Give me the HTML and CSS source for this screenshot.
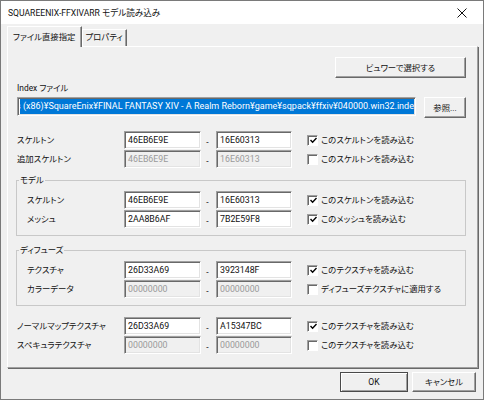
FILE: index.html
```html
<!DOCTYPE html>
<html lang="ja">
<head>
<meta charset="utf-8">
<title>SQUAREENIX-FFXIVARR モデル読み込み</title>
<link rel="stylesheet" href="styles.css">
</head>
<body>
<div class="window">
  <div class="titlebar">
    <span class="title">SQUAREENIX-FFXIVARR モデル読み込み</span>
    <span class="close"><svg width="10" height="10" viewBox="0 0 10 10"><path d="M0.5 0.5 L9.5 9.5 M9.5 0.5 L0.5 9.5" stroke="#111" stroke-width="1" fill="none"/></svg></span>
  </div>
  <div class="client">
    <div class="tabs">
      <div class="tab active">ファイル直接指定</div>
      <div class="tab">プロパティ</div>
    </div>
    <div class="panel">
      <div class="top-row"><div class="btn viewer">ビュワーで選択する</div></div>
      <div class="caption">Index ファイル</div>
      <div class="path-row">
        <div class="edit path"><span class="selection">s (x86)¥SquareEnix¥FINAL FANTASY XIV - A Realm Reborn¥game¥sqpack¥ffxiv¥040000.win32.index</span></div>
        <div class="btn browse">参照...</div>
      </div>

      <div class="rows first">
        <div class="row">
          <span class="lbl">スケルトン</span>
          <div class="edit">46EB6E9E</div>
          <span class="dash">-</span>
          <div class="edit">16E60313</div>
          <div class="check"><span class="box"><svg width="7" height="7" viewBox="0 0 7 7"><path d="M0.5 3 L2.6 5.3 L6.5 1" stroke="#000" stroke-width="1.4" fill="none"/></svg></span><span>このスケルトンを読み込む</span></div>
        </div>
        <div class="row">
          <span class="lbl">追加スケルトン</span>
          <div class="edit disabled">46EB6E9E</div>
          <span class="dash">-</span>
          <div class="edit disabled">16E60313</div>
          <div class="check"><span class="box"></span><span>このスケルトンを読み込む</span></div>
        </div>
      </div>

      <fieldset class="group">
        <legend>モデル</legend>
        <div class="row">
          <span class="lbl">スケルトン</span>
          <div class="edit">46EB6E9E</div>
          <span class="dash">-</span>
          <div class="edit">16E60313</div>
          <div class="check"><span class="box"><svg width="7" height="7" viewBox="0 0 7 7"><path d="M0.5 3 L2.6 5.3 L6.5 1" stroke="#000" stroke-width="1.4" fill="none"/></svg></span><span>このスケルトンを読み込む</span></div>
        </div>
        <div class="row">
          <span class="lbl">メッシュ</span>
          <div class="edit">2AA8B6AF</div>
          <span class="dash">-</span>
          <div class="edit">7B2E59F8</div>
          <div class="check"><span class="box"><svg width="7" height="7" viewBox="0 0 7 7"><path d="M0.5 3 L2.6 5.3 L6.5 1" stroke="#000" stroke-width="1.4" fill="none"/></svg></span><span>このメッシュを読み込む</span></div>
        </div>
      </fieldset>

      <fieldset class="group diffuse">
        <legend>ディフューズ</legend>
        <div class="row">
          <span class="lbl">テクスチャ</span>
          <div class="edit">26D33A69</div>
          <span class="dash">-</span>
          <div class="edit">3923148F</div>
          <div class="check"><span class="box"><svg width="7" height="7" viewBox="0 0 7 7"><path d="M0.5 3 L2.6 5.3 L6.5 1" stroke="#000" stroke-width="1.4" fill="none"/></svg></span><span>このテクスチャを読み込む</span></div>
        </div>
        <div class="row">
          <span class="lbl">カラーデータ</span>
          <div class="edit disabled">00000000</div>
          <span class="dash">-</span>
          <div class="edit disabled">00000000</div>
          <div class="check"><span class="box"></span><span>ディフューズテクスチャに適用する</span></div>
        </div>
      </fieldset>

      <div class="rows last">
        <div class="row">
          <span class="lbl">ノーマルマップテクスチャ</span>
          <div class="edit">26D33A69</div>
          <span class="dash">-</span>
          <div class="edit">A15347BC</div>
          <div class="check"><span class="box"><svg width="7" height="7" viewBox="0 0 7 7"><path d="M0.5 3 L2.6 5.3 L6.5 1" stroke="#000" stroke-width="1.4" fill="none"/></svg></span><span>このテクスチャを読み込む</span></div>
        </div>
        <div class="row">
          <span class="lbl">スペキュラテクスチャ</span>
          <div class="edit disabled">00000000</div>
          <span class="dash">-</span>
          <div class="edit disabled">00000000</div>
          <div class="check"><span class="box"></span><span>このテクスチャを読み込む</span></div>
        </div>
      </div>
    </div>
    <div class="footer">
      <div class="btn ok">OK</div>
      <div class="btn cancel">キャンセル</div>
    </div>
  </div>
</div>
</body>
</html>
```
FILE: styles.css
```css
* { box-sizing: border-box; }
html, body { margin: 0; padding: 0; }
body {
  font-family: Roboto, "Noto Sans CJK JP", sans-serif;
  font-size: 8.4px;
  color: #111;
  background: #fff;
  font-feature-settings: "palt";
}
.window {
  width: 484px;
  height: 400px;
  border: 1px solid #7a7a7a;
  background: #f0f0f0;
  display: flex;
  flex-direction: column;
}
.titlebar {
  height: 23px;
  flex: none;
  background: #fff;
  display: flex;
  align-items: center;
  justify-content: space-between;
  padding: 0 16px 0 7px;
}
.title { line-height: 12px; font-size: 8.6px; }
.close { display: flex; }
.client {
  flex: 1;
  display: flex;
  flex-direction: column;
  padding: 2px 5px 7px 6px;
  min-height: 0;
}
.tabs {
  height: 20px;
  flex: none;
  display: flex;
  align-items: flex-end;
  position: relative;
  z-index: 1;
}
.tab {
  height: 17px;
  padding: 1px 3px 0 3px;
  line-height: 12px;
  border: 1px solid;
  border-bottom: none;
  border-color: #fff #696969 transparent #fff;
  box-shadow: inset -1px 0 0 #a0a0a0;
  white-space: nowrap;
}
.tab.active {
  height: 21px;
  margin-bottom: -1px;
  padding: 4px 5px 0 5px;
  background: #f0f0f0;
}
.panel {
  flex: 1;
  min-height: 0;
  border: 1px solid;
  border-color: #fff #a0a0a0 #a0a0a0 #fff;
  box-shadow: 1px 1px 0 #696969;
  padding: 10px 11px 0 9px;
  display: flex;
  flex-direction: column;
}
.top-row { display: flex; justify-content: flex-end; }
.btn {
  display: flex;
  align-items: center;
  justify-content: center;
  background: #f0f0f0;
  border: 1px solid;
  border-color: #fff #696969 #696969 #fff;
  box-shadow: inset -1px -1px 0 #a0a0a0;
  line-height: 12px;
  white-space: nowrap;
}
.viewer { width: 131px; height: 21px; }
.caption { margin-top: 4px; line-height: 12px; }
.path-row { margin-top: 3px; display: flex; align-items: flex-start; gap: 8px; }
.browse { width: 42px; height: 21px; }
.edit {
  height: 18px;
  background: #fff;
  border: 1px solid;
  border-color: #a0a0a0 #fff #fff #a0a0a0;
  box-shadow: inset 1px 1px 0 #696969, inset -1px -1px 0 #e3e3e3;
  padding: 0 3px;
  font-size: 8.8px;
  line-height: 16px;
  white-space: nowrap;
  overflow: hidden;
}
.edit.disabled { background: #f0f0f0; color: #9a9a9a; }
.edit.path {
  flex: 1;
  height: 19px;
  padding: 1px 1px 1px 2px;
  font-size: 9px;
}
.selection {
  display: block;
  height: 15px;
  line-height: 15px;
  background: #0078d7;
  color: #fff;
  white-space: nowrap;
  overflow: hidden;
  text-indent: -4px;
}
.rows { display: flex; flex-direction: column; gap: 1px; }
.rows.first { margin-top: 13px; }
.rows.last { margin-top: 11px; }
.row {
  display: grid;
  grid-template-columns: 107px 77px 15px 76px 15px auto;
  align-items: center;
  height: 18px;
}
.row > .check { grid-column: 6; }
.lbl { white-space: nowrap; line-height: 12px; }
.dash { text-align: center; padding-top: 3px; padding-right: 2px; line-height: 12px; }
.check { display: flex; align-items: center; gap: 3px; white-space: nowrap; line-height: 12px; }
.box {
  width: 11px;
  height: 11px;
  background: #fff;
  border: 1px solid;
  border-color: #a0a0a0 #fff #fff #a0a0a0;
  box-shadow: inset 1px 1px 0 #696969;
  display: flex;
  align-items: center;
  justify-content: center;
  padding: 1px 0 0 1px;
}
.group {
  margin: 6px 0 0 -1px;
  padding: 5px 0 7px 10px;
  border: 1px solid #c8c8c8;
  display: flex;
  flex-direction: column;
  gap: 1px;
  min-inline-size: 0;
}
.group.diffuse { margin-top: 8px; }
.group .row { grid-template-columns: 97px 77px 15px 76px 15px auto; }
.group legend {
  margin-left: -8px;
  padding: 0 1px;
  line-height: 12px;
}
.footer {
  margin-top: 4px;
  margin-right: 2px;
  height: 20px;
  flex: none;
  display: flex;
  justify-content: flex-end;
  gap: 4px;
}
.ok {
  width: 68px;
  font-size: 8.6px;
  border: 1px solid #4a4a4a;
  box-shadow: inset 1px 1px 0 #fff, inset -1px -1px 0 #a0a0a0;
}
.cancel { width: 64px; }
```
